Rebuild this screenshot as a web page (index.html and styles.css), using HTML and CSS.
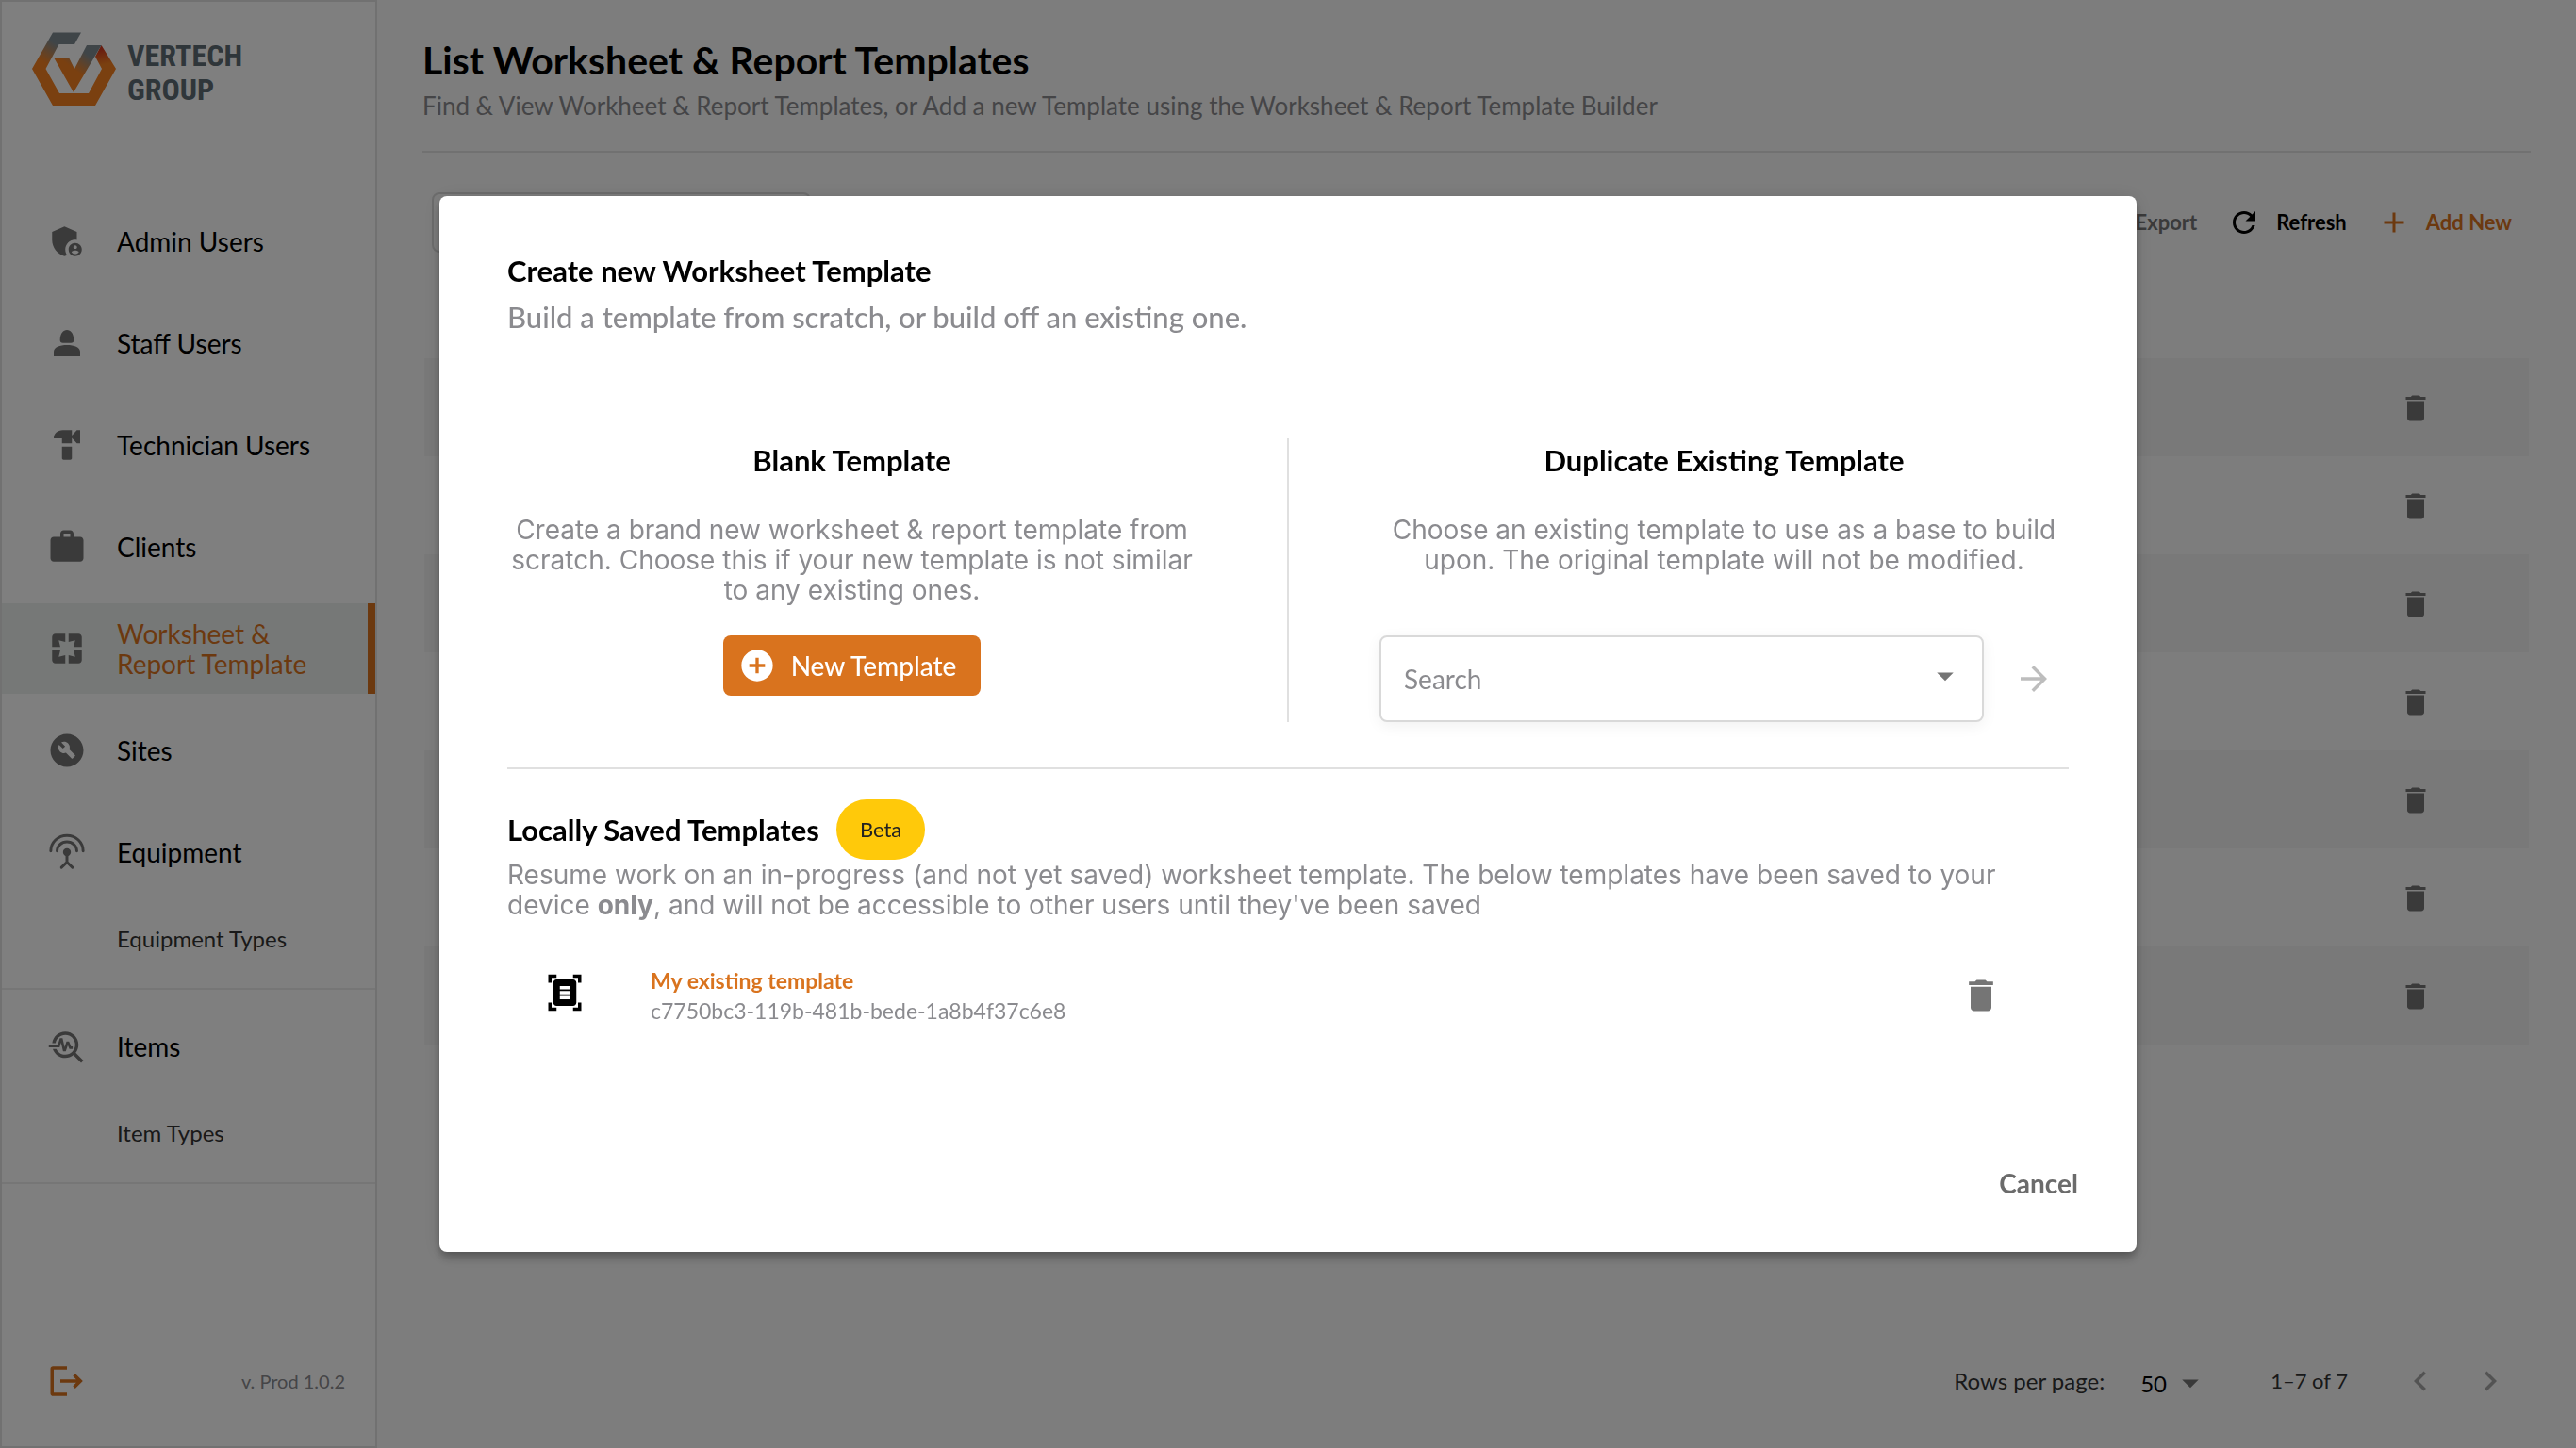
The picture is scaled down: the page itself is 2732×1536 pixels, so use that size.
FILE: index.html
```html
<!DOCTYPE html>
<html lang="en">
<head>
<meta charset="utf-8">
<meta name="viewport" content="width=device-width, initial-scale=1">
<title>List Worksheet &amp; Report Templates</title>
<link rel="stylesheet" href="styles.css">
</head>
<body>
<svg class="sprite" aria-hidden="true">
  <symbol id="i-trash" viewBox="0 0 24 24"><path d="M6 19c0 1.100.9 2 2 2h8c1.100 0 2-.9 2-2V7H6v12zM19 4h-3.500l-1-1h-5l-1 1H5v2h14V4z"/></symbol>
  <symbol id="i-caret" viewBox="0 0 24 24"><path d="M7 10l5 5 5-5z"/></symbol>
</svg>
<div class="app">
  <aside class="sidebar">
    <a class="logo" href="#" aria-label="Vertech Group">
      <svg class="logo-mark" viewBox="34 34 90 79" aria-hidden="true">
        <defs>
          <linearGradient id="g-left" gradientUnits="userSpaceOnUse" x1="68" y1="40" x2="50" y2="68"><stop offset=".3" stop-color="#7f8b91"/><stop offset="1" stop-color="#f48020"/></linearGradient>
          <linearGradient id="g-check" gradientUnits="userSpaceOnUse" x1="98" y1="55" x2="82" y2="76"><stop offset=".2" stop-color="#7f8b91"/><stop offset="1" stop-color="#f48020"/></linearGradient>
          <linearGradient id="g-right" gradientUnits="userSpaceOnUse" x1="107" y1="48" x2="111" y2="68"><stop offset=".2" stop-color="#d23a20"/><stop offset="1" stop-color="#f48020"/></linearGradient>
        </defs>
        <path fill="url(#g-left)" d="M34 73 56 34.500h30L79 47H62.500L48.500 73 63 99h18v13H56z"/>
        <path fill="url(#g-right)" d="M80 99h14l14-26-7-13 6.500-12L123 73l-22 39H80z"/>
        <path fill="url(#g-check)" d="M57 61h16l6 12 13-25h15.500L78 98z"/>
      </svg>
      <span class="logo-name">VERTECH<br>GROUP</span>
    </a>
    <nav class="nav" aria-label="Main">
      <a class="nav-item" href="#"><svg class="icon" viewBox="0 0 24 24"><path d="M17 11c.34 0 .67.04 1 .09V6.270L10.500 3 3 6.270v4.910c0 4.540 3.200 8.790 7.500 9.820.55-.13 1.080-.32 1.600-.55-.69-.98-1.100-2.170-1.100-3.450 0-3.310 2.690-6 6-6z"/><path fill-rule="evenodd" d="M17 13c-2.210 0-4 1.790-4 4s1.790 4 4 4 4-1.790 4-4-1.790-4-4-4zm0 1.380c.62 0 1.120.51 1.120 1.120s-.51 1.120-1.120 1.120-1.120-.51-1.120-1.120.5-1.120 1.120-1.120zm0 5.370c-.93 0-1.740-.46-2.240-1.170.05-.72 1.510-1.080 2.240-1.080s2.190.36 2.240 1.080c-.5.71-1.310 1.170-2.240 1.170z"/></svg>Admin Users</a>
      <a class="nav-item" href="#"><svg class="icon" viewBox="0 0 24 24"><path d="M12 4c2.300 0 4 2 4.200 6 0 1.300-.6 1.900-1.800 1.900H9.600c-1.200 0-1.800-.6-1.800-1.900C8 6 9.700 4 12 4zM12 13.200c-4.400 0-8 1.500-8 4V20h16v-2.800c0-2.500-3.600-4-8-4z"/></svg>Staff Users</a>
      <a class="nav-item" href="#"><svg class="icon" viewBox="0 0 24 24"><path d="M4 8c0-3 2.200-5 5.500-5H15v8H9V8zM15 6.300 18 3h2v8h-2l-3-3.300zM9 13h6v7c0 .6-.4 1-1 1h-4c-.6 0-1-.4-1-1z"/></svg>Technician Users</a>
      <a class="nav-item" href="#"><svg class="icon" viewBox="0 0 24 24"><path fill-rule="evenodd" d="M20 6h-4V4c0-1.110-.89-2-2-2h-4c-1.110 0-2 .89-2 2v2H4c-1.110 0-1.990.89-1.990 2L2 19c0 1.110.89 2 2 2h16c1.110 0 2-.89 2-2V8c0-1.110-.89-2-2-2zm-6 0h-4V4h4v2z"/></svg>Clients</a>
      <a class="nav-item is-current" href="#" aria-current="page"><svg class="icon" viewBox="0 0 24 24"><path d="M3 5v6h5L7 7l4 1V3H5c-1.100 0-2 .9-2 2zm5 8H3v6c0 1.100.9 2 2 2h6v-5l-4 1 1-4zm9 4l-4-1v5h6c1.100 0 2-.9 2-2v-6h-5l1 4zm2-14h-6v5l4-1-1 4h5V5c0-1.100-.9-2-2-2z"/></svg><span>Worksheet &amp;<br>Report Template</span></a>
      <a class="nav-item" href="#"><svg class="icon" viewBox="0 0 24 24"><path fill-rule="evenodd" d="M12 2C6.480 2 2 6.480 2 12c0 5.520 4.480 10 10 10s10-4.480 10-10C22 6.480 17.520 2 12 2zm4.900 13.490-1.400 1.400c-.2.2-.51.2-.71 0l-3.410-3.410c-1.220.43-2.640.17-3.620-.81-1.110-1.110-1.300-2.790-.59-4.100l2.350 2.350 1.410-1.410-2.350-2.340c1.320-.71 2.990-.52 4.100.59.98.98 1.240 2.400.81 3.620l3.410 3.410c.19.19.19.51 0 .7z"/></svg>Sites</a>
      <a class="nav-item" href="#"><svg class="icon" viewBox="0 0 24 24"><g fill="none" stroke="currentColor" stroke-width="1.700" stroke-linecap="round"><path d="M2.200 11.300a9.800 9.500 0 0 1 19.600 0M6 11.300a6 5.600 0 0 1 12 0M12 12v6l-3.300 3.200M12 18l3.300 3.200"/></g><circle cx="12" cy="12" r="2.400"/></svg>Equipment</a>
      <a class="nav-sub" href="#">Equipment Types</a>
      <a class="nav-item nav-group" href="#"><svg class="icon" viewBox="0 0 24 24"><path d="M22 20.590l-4.690-4.690C18.370 14.550 19 12.850 19 11c0-4.420-3.580-8-8-8-4.080 0-7.440 3.050-7.930 7h2.020C5.570 7.170 8.030 5 11 5c3.310 0 6 2.690 6 6s-2.690 6-6 6c-2.420 0-4.500-1.440-5.450-3.500H3.400C4.450 16.690 7.460 19 11 19c1.850 0 3.550-.63 4.900-1.690L20.590 22 22 20.590z"/><path d="M8.430 9.690L9.650 15h1.640l1.260-3.780.95 2.280h2V12h-1l-1.250-3h-1.540l-1.120 3.370L9.350 7H7.700l-1.250 4H1v1.500h6.550l.88-2.810z"/></svg>Items</a>
      <a class="nav-sub" href="#">Item Types</a>
    </nav>
    <div class="sidebar-foot">
      <button class="logout" type="button" aria-label="Log out"><svg class="icon" viewBox="0 0 24 24"><path d="M12 3v2H4v14h8v2H3.500C2.700 21 2 20.300 2 19.500v-15C2 3.700 2.700 3 3.500 3zM8 11h9.600l-2-2L17 7.400l4.600 4.600-4.600 4.600-1.400-1.600 2-2H8z"/></svg></button>
      <span class="version">v. Prod 1.0.2</span>
    </div>
  </aside>

  <main class="main">
    <header class="page-head">
      <h1 class="page-title">List Worksheet &amp; Report Templates</h1>
      <p class="page-sub">Find &amp; View Workheet &amp; Report Templates, or Add a new Template using the Worksheet &amp; Report Template Builder</p>
    </header>
    <div class="toolbar">
      <input class="filter" type="search" aria-label="Filter templates">
      <div class="actions">
        <button class="action muted" type="button">Export</button>
        <button class="action" type="button"><svg class="icon-sm" viewBox="0 0 24 24"><path d="M17.650 6.350C16.200 4.900 14.210 4 12 4c-4.420 0-7.990 3.580-7.990 8s3.570 8 7.990 8c3.730 0 6.840-2.550 7.730-6h-2.080c-.82 2.330-3.040 4-5.650 4-3.310 0-6-2.690-6-6s2.690-6 6-6c1.660 0 3.140.69 4.220 1.780L13 11h7V4l-2.350 2.350z"/></svg>Refresh</button>
        <button class="action accent" type="button"><svg class="icon-sm" viewBox="0 0 24 24"><path d="M19 13h-6v6h-2v-6H5v-2h6V5h2v6h6v2z"/></svg>Add New</button>
      </div>
    </div>
    <table class="rows" aria-label="Templates">
      <tbody>
        <tr><td></td><td class="cell-action"><button class="icon-btn" type="button" aria-label="Delete"><svg class="icon-sm"><use href="#i-trash"/></svg></button></td></tr>
        <tr><td></td><td class="cell-action"><button class="icon-btn" type="button" aria-label="Delete"><svg class="icon-sm"><use href="#i-trash"/></svg></button></td></tr>
        <tr><td></td><td class="cell-action"><button class="icon-btn" type="button" aria-label="Delete"><svg class="icon-sm"><use href="#i-trash"/></svg></button></td></tr>
        <tr><td></td><td class="cell-action"><button class="icon-btn" type="button" aria-label="Delete"><svg class="icon-sm"><use href="#i-trash"/></svg></button></td></tr>
        <tr><td></td><td class="cell-action"><button class="icon-btn" type="button" aria-label="Delete"><svg class="icon-sm"><use href="#i-trash"/></svg></button></td></tr>
        <tr><td></td><td class="cell-action"><button class="icon-btn" type="button" aria-label="Delete"><svg class="icon-sm"><use href="#i-trash"/></svg></button></td></tr>
        <tr><td></td><td class="cell-action"><button class="icon-btn" type="button" aria-label="Delete"><svg class="icon-sm"><use href="#i-trash"/></svg></button></td></tr>
      </tbody>
    </table>
    <footer class="pager">
      <label for="per-page">Rows per page:</label>
      <span class="per-page">
        <select id="per-page" class="per-page-select"><option>50</option></select>
        <svg class="icon caret"><use href="#i-caret"/></svg>
      </span>
      <span class="range">1–7 of 7</span>
      <span class="pages">
        <button class="icon-btn faint" type="button" aria-label="Previous page"><svg class="icon" viewBox="0 0 24 24"><path d="M15.410 7.410L14 6l-6 6 6 6 1.410-1.410L10.830 12z"/></svg></button>
        <button class="icon-btn faint" type="button" aria-label="Next page"><svg class="icon" viewBox="0 0 24 24"><path d="M10 6L8.590 7.410 13.170 12l-4.580 4.590L10 18l6-6z"/></svg></button>
      </span>
    </footer>
  </main>
</div>

<div class="overlay">
  <section class="modal" role="dialog" aria-modal="true" aria-labelledby="modal-title">
    <h2 class="title" id="modal-title">Create new Worksheet Template</h2>
    <p class="lead">Build a template from scratch, or build off an existing one.</p>
    <div class="choices">
      <div class="choice">
        <h3 class="title">Blank Template</h3>
        <p class="text choice-text">Create a brand new worksheet &amp; report template from scratch. Choose this if your new template is not similar to any existing ones.</p>
        <button class="new-btn" type="button"><svg class="icon-md" viewBox="0 0 24 24"><path fill-rule="evenodd" d="M12 2C6.480 2 2 6.480 2 12s4.480 10 10 10 10-4.480 10-10S17.520 2 12 2zm5 11h-4v4h-2v-4H7v-2h4V7h2v4h4v2z"/></svg>New Template</button>
      </div>
      <div class="rule"></div>
      <div class="choice">
        <h3 class="title">Duplicate Existing Template</h3>
        <p class="text choice-text">Choose an existing template to use as a base to build upon. The original template will not be modified.</p>
        <div class="picker">
          <div class="select-wrap">
            <select class="template-select" aria-label="Existing template"><option>Search</option></select>
            <svg class="icon caret"><use href="#i-caret"/></svg>
          </div>
          <button class="icon-btn go" type="button" aria-label="Duplicate"><svg class="icon" viewBox="0 0 24 24"><path d="M12 4l-1.410 1.410L16.170 11H4v2h12.170l-5.580 5.590L12 20l8-8z"/></svg></button>
        </div>
      </div>
    </div>
    <div class="saved">
      <div class="saved-head"><h3 class="title">Locally Saved Templates</h3><span class="pill">Beta</span></div>
      <p class="text">Resume work on an in-progress (and not yet saved) worksheet template. The below templates have been saved to your device <strong>only</strong>, and will not be accessible to other users until they've been saved</p>
      <ul class="saved-list">
        <li class="saved-item">
          <svg class="icon doc" viewBox="0 0 24 24"><path fill-rule="evenodd" d="M7 3H4v3H2V1h5v2zM22 6V1h-5v2h3v3h2zM7 21H4v-3H2v5h5v-2zM20 18v3h-3v2h5v-5h-2zM19 18c0 1.100-.9 2-2 2H7c-1.100 0-2-.9-2-2V6c0-1.100.9-2 2-2h10c1.100 0 2 .9 2 2v12zM15 8H9v2h6V8zm0 3H9v2h6v-2zm0 3H9v2h6v-2z"/></svg>
          <div class="saved-name"><a class="saved-link" href="#">My existing template</a><span class="saved-id">c7750bc3-119b-481b-bede-1a8b4f37c6e8</span></div>
          <button class="icon-btn" type="button" aria-label="Delete saved template"><svg class="icon-lg"><use href="#i-trash"/></svg></button>
        </li>
      </ul>
    </div>
    <div class="modal-foot"><button class="cancel" type="button">Cancel</button></div>
  </section>
</div>
</body>
</html>
```
FILE: styles.css
```css
:root {
  --accent: #d9731e;
  --muted: #8b8b8f;
  --icon: #757575;
  --line: #e3e3e3;
}

* { box-sizing: border-box; }

body {
  margin: 0;
  font: 28px/32px Lato, "Noto Sans", sans-serif;
  color: #000;
  background: #fafafa;
}

h1, h2, h3, p, ul { margin: 0; padding: 0; }
ul { list-style: none; }
a { color: inherit; text-decoration: none; }
svg { display: block; flex: none; fill: currentColor; }
button, select, input { font: inherit; color: inherit; margin: 0; }
button { padding: 0; border: 0; background: none; cursor: pointer; }
select { appearance: none; border: 0; background: none; }

.sprite { position: absolute; width: 0; height: 0; }
.icon { width: 42px; height: 42px; }
.icon-sm { width: 36px; height: 36px; }
.icon-md { width: 40px; height: 40px; }
.icon-lg { width: 44px; height: 44px; }
.icon-btn { display: inline-flex; color: var(--icon); vertical-align: middle; }
.caret { position: absolute; color: var(--icon); pointer-events: none; }

.app { display: flex; min-height: 100vh; }

/* Sidebar */
.sidebar {
  display: flex;
  flex: none;
  flex-direction: column;
  width: 400px;
  padding-top: 32px;
  border: 2px solid var(--line);
  background: #fff;
}
.logo { display: flex; gap: 11px; align-items: flex-end; padding-left: 32px; }
.logo-mark { width: 90px; height: 79px; }
.logo-name {
  color: #5e6c75;
  font: 700 32px/36px "Roboto Condensed", "Liberation Sans Narrow", sans-serif;
}
.nav { display: flex; flex-direction: column; gap: 12px; padding-top: 95px; }
.nav-item { display: flex; gap: 32px; align-items: center; height: 96px; padding-left: 48px; }
.nav-item .icon { color: var(--icon); }
.is-current {
  border-right: 8px solid var(--accent);
  color: var(--accent);
  background: #ecf0ee;
}
.nav-sub {
  padding: 16px 0 36px 122px;
  border-bottom: 2px solid #ededed;
  color: #333;
  font-size: 24px;
}

.sidebar-foot {
  display: flex;
  justify-content: space-between;
  align-items: center;
  margin-top: auto;
  padding: 0 32px 48px 48px;
}
.logout { color: var(--accent); }
.version { color: var(--muted); font-size: 20px; }

/* Template list */
.main { display: flex; flex: 1; flex-direction: column; padding: 40px 48px 50px; }
.page-head { padding-bottom: 32px; border-bottom: 2px solid var(--line); }
.page-title { font-size: 41px; line-height: 48px; font-weight: 700; }
.page-sub { margin-top: 8px; color: var(--muted); font-size: 26px; }
.toolbar { display: flex; justify-content: space-between; margin: 42px 20px 0 10px; }
.filter {
  width: 402px;
  height: 64px;
  padding: 0 24px;
  border: 2px solid #d9d9d9;
  border-radius: 8px;
  background: none;
}
.actions { display: flex; gap: 32px; align-items: center; }
.action { display: flex; gap: 16px; align-items: center; font-size: 22px; font-weight: 700; }
.muted { color: var(--icon); }
.accent { color: var(--accent); }

.rows { margin: 112px 2px 0; border-collapse: collapse; }
.rows td { height: 104px; padding: 0; }
.rows tr:nth-child(odd) { background: #f3f3f3; }
.cell-action { width: 138px; }

.pager {
  display: flex;
  justify-content: flex-end;
  align-items: center;
  margin-top: auto;
  padding-right: 22px;
  color: #333;
  font-size: 24px;
}
.per-page { position: relative; margin: 0 64px 0 38px; padding-top: 6px; color: #000; }
.per-page-select { display: block; width: 74px; height: 32px; padding: 0; }
.per-page .caret { top: 0; right: 0; }
.range { font-size: 22px; }
.pages { display: flex; gap: 32px; margin-left: 56px; }
.faint { color: #a6a6a6; }

/* Dialog */
.overlay {
  position: fixed;
  inset: 0;
  display: flex;
  justify-content: center;
  align-items: center;
  padding: 48px;
  background: rgba(0, 0, 0, .5);
}
.modal {
  width: 100%;
  max-width: 1800px;
  padding: 60px 72px 53px;
  border-radius: 8px;
  background: #fff;
  box-shadow: 0 4px 8px -2px rgba(0, 0, 0, .2), 0 8px 10px rgba(0, 0, 0, .14), 0 2px 20px rgba(0, 0, 0, .12);
}
.title { font-size: 31px; line-height: 38px; font-weight: 700; }
.lead { margin-top: 11px; color: var(--muted); font-size: 31px; line-height: 38px; font-weight: 500; }
.text { color: var(--muted); font-family: Inter, sans-serif; }

.choices {
  display: grid;
  grid-template-columns: 1fr 2px 1fr;
  gap: 96px;
  padding: 110px 0 48px;
  border-bottom: 2px solid #e0e0e0;
}
.rule { background: #e0e0e0; }
.choice { display: flex; flex-direction: column; align-items: center; padding-top: 4px; text-align: center; }
.choice-text { min-height: 96px; margin: 39px 0 32px; }
.new-btn {
  display: flex;
  gap: 16px;
  align-items: center;
  height: 64px;
  padding: 0 26px 0 16px;
  border-radius: 8px;
  background: var(--accent);
  color: #fff;
  font-weight: 500;
}
.picker { display: flex; gap: 32px; align-items: center; width: 100%; padding-right: 16px; }
.select-wrap { position: relative; flex: 1; }
.template-select {
  display: block;
  width: 100%;
  height: 92px;
  padding: 0 72px 0 24px;
  border: 2px solid #d9d9d9;
  border-radius: 8px;
  background: #fff;
  box-shadow: 0 4px 16px rgba(0, 0, 0, .06);
  color: var(--muted);
}
.select-wrap .caret { top: 22px; right: 20px; }
.go { color: #bdbdbd; }

.saved { padding-top: 32px; }
.saved-head { display: flex; gap: 18px; align-items: center; }
.pill { padding: 16px 25px; border-radius: 32px; background: #ffc90a; color: #222; font-size: 22px; }
.saved-list { padding: 48px 71px 0 40px; }
.saved-item { display: flex; align-items: center; }
.doc { margin-bottom: 6px; color: #000; }
.saved-name { display: flex; flex: 1; flex-direction: column; margin-left: 70px; font-size: 23px; }
.saved-link { color: var(--accent); font-weight: 700; }
.saved-id { color: var(--muted); }
.modal-foot { display: flex; justify-content: flex-end; margin: 147px -10px 0 0; }
.cancel { color: #6b6b6b; font-weight: 700; line-height: 40px; }
```
